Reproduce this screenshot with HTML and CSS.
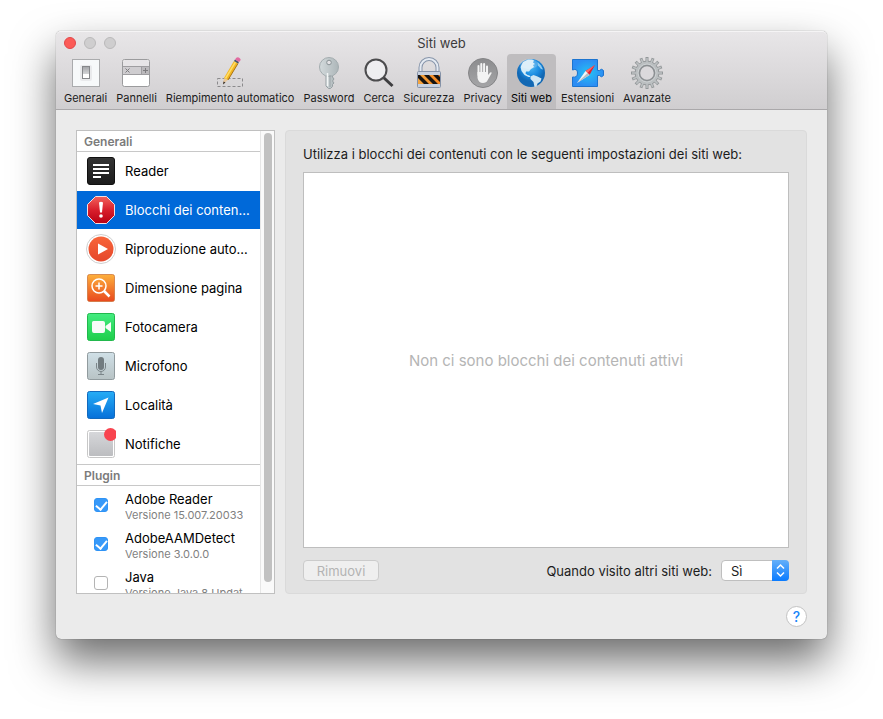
FILE: index.html
```html
<!DOCTYPE html>

<html lang="it">
	<head>
		<meta charset="utf-8" />
		<title>Siti web</title>
		<link rel="stylesheet" href="styles.css">
	</head>

	<body>
		<div class="window">
			<header class="titlebar">
				<div class="title">
					<div class="lights">
						<button class="light close" aria-label="Chiudi"></button>
						<button class="light" aria-label="Riduci" disabled></button>
						<button class="light" aria-label="Ingrandisci" disabled></button>
					</div>
					<h1>Siti web</h1>
				</div>

				<nav class="toolbar">
					<button class="tool">
						<svg width="32" height="32" viewBox="0 0 32 32">
							<rect x="2.5" y="2.5" width="27" height="27" fill="#f7f9fa" stroke="#aaabad"/>
							<rect x="10" y="8" width="12" height="16" rx="2" fill="#e9eaec"/>
							<rect x="12.5" y="9.500" width="7" height="12" fill="#fff" stroke="#85878a"/>
							<rect x="13" y="10" width="6" height="7" fill="url(#grey)"/>
						</svg>
						Generali
					</button>
					<button class="tool">
						<svg width="32" height="32" viewBox="0 0 32 32">
							<rect x="2.5" y="2.5" width="27" height="27" rx="2" fill="#fff" stroke="#9b9b9d"/>
							<path d="M3 5a2 2 0 0 1 2-2h22a2 2 0 0 1 2 2v5H3z" fill="#e7e5e7"/>
							<path d="M3 9.5h26v8H3z" fill="#cfcdd0"/>
							<path d="M3 9.5h26M3 17.5h26M21.5 9.5v8" stroke="#9e9da0" fill="none"/>
							<path d="M22 10h7v7h-7z" fill="#bbb9bc"/>
							<path d="M5.5 11.5l4 4m0-4l-4 4M23 13.5h5M25.5 11v5" stroke="#7d7c7f" fill="none"/>
						</svg>
						Pannelli
					</button>
					<button class="tool">
						<svg width="32" height="32" viewBox="0 0 32 32">
							<path d="M3.5 21.5h25v8h-25z" fill="none" stroke="#8b8a8c" stroke-dasharray="3 2"/>
							<path d="M9 27l1-6 4 2z" fill="#e8c79c"/>
							<path d="M10 21L20 4l4 2.5L14 23z" fill="#f2b51f"/>
							<path d="M11.5 21.5L21.5 5" stroke="#ffdd66" stroke-width="1.5"/>
							<path d="M14 23L24 6.5" stroke="#a87217"/>
							<path d="M20 4l1-1.500 4 2.500-1 1.500z" fill="#44546b"/>
							<path d="M21 2.500q2-3.500 4.500-1.500t-.5 4z" fill="#e26aa0"/>
							<path d="M9 27.5l.5-3 2 1z" fill="#3b332c"/>
						</svg>
						Riempimento automatico
					</button>
					<button class="tool">
						<svg width="32" height="32" viewBox="0 0 32 32">
							<path d="M13 17v12l2.500 2.500h2l2-2v-2l1.500-1.500-1.500-2 1.500-2-1.500-2v-3z" fill="url(#steel)" stroke="#969fa2"/>
							<circle cx="16" cy="10" r="9.500" fill="url(#steel)" stroke="#a3acaf"/>
							<circle cx="16" cy="5.500" r="2.300" fill="#e3e2e5" stroke="#8a9396"/>
							<path d="M14.5 16v13" stroke="#f3f6f6" stroke-width="1.5"/>
							<path d="M17 18v12" stroke="#99a2a6"/>
						</svg>
						Password
					</button>
					<button class="tool">
						<svg width="32" height="32" viewBox="0 0 32 32">
							<path d="M20 20l9.500 9" stroke="#3e3e40" stroke-width="3"/>
							<circle cx="13" cy="13" r="10.500" fill="#f2f3f5" fill-opacity=".8" stroke="#4c4c4e" stroke-width="2"/>
						</svg>
						Cerca
					</button>
					<button class="tool">
						<svg width="32" height="32" viewBox="0 0 32 32">
							<path d="M7.5 16V10.500a8.500 8.500 0 0 1 17 0V16" fill="none" stroke="#8795aa" stroke-width="4"/>
							<path d="M7.5 16V10.500a8.500 8.500 0 0 1 17 0V16" fill="none" stroke="#e4eaf2" stroke-width="2"/>
							<rect x="4.5" y="14.5" width="23" height="16" rx="1" fill="#c6d0df" stroke="#8592a7"/>
							<path d="M5 18h22v9H5z" fill="url(#amber)"/>
							<path d="M5 18h2l9 9h-5L5 21zM11 18h5l9 9h-5zM20 18h5l2 2v5z" fill="#171412"/>
						</svg>
						Sicurezza
					</button>
					<button class="tool">
						<svg width="32" height="32" viewBox="0 0 32 32">
							<circle cx="16" cy="16" r="14.500" fill="url(#disc)" stroke="#858587"/>
							<path d="M11.5 18V9M14.300 16V7M17.100 16V7M20 18V9.500" stroke="#f3f3f3" stroke-width="2" stroke-linecap="round"/>
							<path d="M10.500 15H21v3l2.200-2.500q1.700-.8 1.400.8l-4 7q-1.200 2.700-4.700 2.700-4.400 0-5.400-5z" fill="#f3f3f3"/>
						</svg>
						Privacy
					</button>
					<button class="tool active">
						<svg width="32" height="32" viewBox="0 0 32 32">
							<circle cx="16" cy="16" r="14" fill="url(#ocean)"/>
							<path d="M8 5l5-2.500h4l2 1-1 2 2 1.500-2 1 1 2-3 2-2 2.500-3 0-.5 2 2 1.500 2 .5 1 1.500-2 0-4-2-3-4-1-4z" fill="#d5ecf8"/>
							<path d="M15.500 19.500l3-1.500 4 1.500 4 2-1 3-3 2-1 3-2 .5-1-5-3-3z" fill="#cfe6f3"/>
							<path d="M22.500 5l3.500 3.500 2 4-2-.5-3-3.500z" fill="#8fcbf0"/>
							<ellipse cx="14" cy="7" rx="9" ry="5" fill="#fff" opacity=".2"/>
						</svg>
						Siti web
					</button>
					<button class="tool">
						<svg width="32" height="32" viewBox="0 0 32 32">
							<path d="M.5 2.5h25v11h2q2-2.500 4 0v5q-2 2.500-4 0h-2v11H.5V20q5 1 5-4t-5-3z" fill="url(#puzzle)" stroke="#1c74cf"/>
							<path d="M23 8l-5.500 10-4-4z" fill="#e4212e"/>
							<path d="M23 8l-9.500 6 2 2z" fill="#ff6a66"/>
							<path d="M5 26l8.500-12 4 4z" fill="#f4f6f7"/>
							<path d="M5 26l10.500-10 2 2z" fill="#b9bec2"/>
						</svg>
						Estensioni
					</button>
					<button class="tool">
						<svg width="32" height="32" viewBox="0 0 32 32">
							<g stroke="#94989a" stroke-width="3">
								<path d="M16 0v32M0 16h32"/>
								<path d="M16 0v32M0 16h32" transform="rotate(22.5 16 16)"/>
								<path d="M16 0v32M0 16h32" transform="rotate(45 16 16)"/>
								<path d="M16 0v32M0 16h32" transform="rotate(67.5 16 16)"/>
							</g>
							<circle cx="16" cy="16" r="12" fill="#b9bdbf" stroke="#94989a"/>
							<g stroke="#bcc0c2" stroke-width="1.5">
								<path d="M16 1v30M1 16h30"/>
								<path d="M16 1v30M1 16h30" transform="rotate(22.5 16 16)"/>
								<path d="M16 1v30M1 16h30" transform="rotate(45 16 16)"/>
								<path d="M16 1v30M1 16h30" transform="rotate(67.5 16 16)"/>
							</g>
							<circle cx="16" cy="16" r="9" fill="none" stroke="#cdd1d3"/>
							<circle cx="16" cy="16" r="7.500" fill="#dbd9dc" stroke="#8b8f92" stroke-width="1.5"/>
						</svg>
						Avanzate
					</button>
				</nav>
			</header>

			<main class="content">
				<aside class="sidebar">
					<div class="list">
						<h2>Generali</h2>
						<ul>
							<li><button class="row">
								<svg width="30" height="32" viewBox="0 0 30 32">
									<rect x="1.5" y="2.5" width="27" height="27" rx="2.5" fill="url(#ink)" stroke="#101010"/>
									<path d="M7 10h16M7 14h16M7 18h16M7 22h8" stroke="#fff" stroke-width="2"/>
								</svg>
								<span>Reader</span>
							</button></li>
							<li><button class="row selected">
								<svg width="30" height="32" viewBox="0 0 30 32">
									<path d="M9.5 2.5h11l8 8v11l-8 8h-11l-8-8v-11z" fill="url(#stop)" stroke="#f4dfe2"/>
									<path d="M13 8.500q2-1.500 4 0l-1 10h-2z" fill="#fff"/>
									<circle cx="15" cy="22" r="1.800" fill="#fff"/>
								</svg>
								<span>Blocchi dei contenuti</span>
							</button></li>
							<li><button class="row">
								<svg width="30" height="32" viewBox="0 0 30 32">
									<circle cx="15" cy="16" r="14.500" fill="#fff" stroke="#cfcfcf"/>
									<circle cx="15" cy="16" r="12.500" fill="url(#play)"/>
									<path d="M12 10.500l10 5.500-10 5.500z" fill="#fff"/>
								</svg>
								<span>Riproduzione automatica</span>
							</button></li>
							<li><button class="row">
								<svg width="30" height="32" viewBox="0 0 30 32">
									<rect x="1.5" y="2.5" width="27" height="27" rx="2" fill="url(#orange)" stroke="#c96c31" stroke-opacity=".7"/>
									<circle cx="13" cy="14" r="7" fill="none" stroke="#fff" stroke-width="1.5"/>
									<path d="M18 19l5.500 5.500" stroke="#fff" stroke-width="2.5"/>
									<path d="M9.500 14h7M13 10.500v7" stroke="#fff" stroke-width="1.5"/>
								</svg>
								<span>Dimensione pagina</span>
							</button></li>
							<li><button class="row">
								<svg width="30" height="32" viewBox="0 0 30 32">
									<rect x="1.5" y="2.5" width="27" height="27" rx="2" fill="url(#green)" stroke="#22b84d"/>
									<path d="M6 11.500q0-1.500 1.500-1.500H17q2 0 2 2v8q0 2-2 2H8q-2 0-2-2zM19.500 15l5.500-4v10l-5.500-4z" fill="#f7fbf8"/>
								</svg>
								<span>Fotocamera</span>
							</button></li>
							<li><button class="row">
								<svg width="30" height="32" viewBox="0 0 30 32">
									<rect x="1.5" y="2.5" width="27" height="27" rx="2" fill="url(#mist)" stroke="#919b9e"/>
									<rect x="12" y="7" width="6" height="13" rx="3" fill="#727c80"/>
									<path d="M10.500 13v4a4.500 4.500 0 0 0 9 0v-4M15 21.500v3M12 24.500h6" stroke="#7b8589" fill="none"/>
								</svg>
								<span>Microfono</span>
							</button></li>
							<li><button class="row">
								<svg width="30" height="32" viewBox="0 0 30 32">
									<rect x="1.5" y="2.5" width="27" height="27" rx="2" fill="url(#blue)" stroke="#1269bd"/>
									<path d="M22.500 8.500L16 24l-1.500-7.500L7 15z" fill="#fff"/>
								</svg>
								<span>Località</span>
							</button></li>
							<li><button class="row">
								<svg width="30" height="32" viewBox="0 0 30 32">
									<rect x="1.5" y="2.5" width="27" height="27" rx="2" fill="#fff" stroke="#c7c7c7"/>
									<rect x="3" y="4" width="24" height="24" rx="1" fill="url(#tile)"/>
									<circle cx="24.500" cy="6.500" r="6.500" fill="#f8444f"/>
								</svg>
								<span>Notifiche</span>
							</button></li>
						</ul>
						<h2 class="plugin">Plugin</h2>
						<ul>
							<li><label class="row">
								<input type="checkbox" checked>
								<span>Adobe Reader<small>Versione 15.007.20033</small></span>
							</label></li>
							<li><label class="row">
								<input type="checkbox" checked>
								<span>AdobeAAMDetect<small>Versione 3.0.0.0</small></span>
							</label></li>
							<li><label class="row">
								<input type="checkbox">
								<span>Java<small>Versione Java 8 Updat</small></span>
							</label></li>
						</ul>
					</div>
					<div class="track"><div class="thumb"></div></div>
				</aside>

				<section class="panel">
					<p>Utilizza i blocchi dei contenuti con le seguenti impostazioni dei siti web:</p>
					<div class="sites">Non ci sono blocchi dei contenuti attivi</div>
					<div class="controls">
						<button class="remove" disabled>Rimuovi</button>
						<label for="others">Quando visito altri siti web:</label>
						<div class="popup">
							<select id="others">
								<option>Sì</option>
								<option>No</option>
							</select>
							<svg class="arrows" width="17" height="21" viewBox="0 0 17 21">
								<path d="M5 8.500L8.500 5 12 8.500M5 12.500L8.500 16l3.500-3.500" fill="none" stroke="#fff" stroke-width="1.5"/>
							</svg>
						</div>
					</div>
				</section>
			</main>

			<footer>
				<button class="help" aria-label="Aiuto">?</button>
			</footer>
		</div>

		<!-- shared gradients for the icons -->
		<svg class="defs" width="0" height="0" aria-hidden="true">
			<defs>
				<linearGradient id="grey" x2="0" y2="1"><stop stop-color="#a5a7aa"/><stop offset="1" stop-color="#d4d5d7"/></linearGradient>
				<linearGradient id="steel" x2="1" y2="0"><stop stop-color="#d3dadc"/><stop offset="1" stop-color="#adb6b9"/></linearGradient>
				<linearGradient id="amber" x2="1" y2="0"><stop stop-color="#f3a540"/><stop offset="1" stop-color="#f5841f"/></linearGradient>
				<linearGradient id="disc" x2="0" y2="1"><stop stop-color="#8c8c8e"/><stop offset="1" stop-color="#a5a5a7"/></linearGradient>
				<radialGradient id="ocean" cy=".3"><stop stop-color="#4bb5f3"/><stop offset=".6" stop-color="#1a8be0"/><stop offset="1" stop-color="#1268b4"/></radialGradient>
				<radialGradient id="puzzle"><stop stop-color="#24c3f4"/><stop offset="1" stop-color="#2c8df3"/></radialGradient>
				<linearGradient id="ink" x2="0" y2="1"><stop stop-color="#343434"/><stop offset="1" stop-color="#1c1c1c"/></linearGradient>
				<linearGradient id="stop" x2="0" y2="1"><stop stop-color="#f2625c"/><stop offset=".5" stop-color="#d91f2c"/><stop offset="1" stop-color="#b80014"/></linearGradient>
				<linearGradient id="play" x2="0" y2="1"><stop stop-color="#f8653a"/><stop offset="1" stop-color="#e5472b"/></linearGradient>
				<linearGradient id="orange" x2="0" y2="1"><stop stop-color="#fdb03c"/><stop offset="1" stop-color="#e9481d"/></linearGradient>
				<linearGradient id="green" x2="0" y2="1"><stop stop-color="#43ec80"/><stop offset="1" stop-color="#1fce4b"/></linearGradient>
				<linearGradient id="mist" x2="0" y2="1"><stop stop-color="#d0e0e7"/><stop offset="1" stop-color="#b8c3c5"/></linearGradient>
				<linearGradient id="blue" x2="0" y2="1"><stop stop-color="#26adf6"/><stop offset="1" stop-color="#0670d9"/></linearGradient>
				<linearGradient id="tile" x2="0" y2="1"><stop stop-color="#d6d7da"/><stop offset="1" stop-color="#bcbdc0"/></linearGradient>
			</defs>
		</svg>
	</body>

</html>
```

FILE: styles.css
```css
*{
	box-sizing: border-box;
}

body{
	display: flex;
	height: 100vh;
	margin: 0;
	padding: 31px 56px 80px;
	overflow: hidden;
	background-color: #fff;
	color: #1c1c1c;
	font-family: Inter, "Liberation Sans", sans-serif;
	font-size: 13px;
}

h1, h2, p, ul{
	margin: 0;
	padding: 0;
}

ul{
	list-style: none;
}

button, select, input{
	margin: 0;
	padding: 0;
	border: none;
	background: none;
	color: inherit;
	font: inherit;
}

.defs{
	position: absolute;
}

.window{
	display: flex;
	flex-direction: column;
	flex: 1;
	min-width: 0;
	border-radius: 5px;
	background-color: #ebebeb;
	box-shadow: 0 0 1px rgba(0,0,0,.6), 0 22px 44px rgba(0,0,0,.58);
}

/* title bar and toolbar */

.titlebar{
	height: 79px;
	border-top: 1px solid #f5f4f5;
	border-bottom: 1px solid #aaa8aa;
	border-radius: 5px 5px 0 0;
	background: linear-gradient(#e8e6e8, #d0ced0);
}

.title{
	display: grid;
	grid-template-columns: 1fr auto 1fr;
	align-items: center;
	height: 22px;
	padding: 0 8px;
}

.title h1{
	font-size: 13px;
	font-weight: normal;
	color: #3c3b3c;
}

.lights{
	display: flex;
	gap: 8px;
}

.light{
	width: 12px;
	height: 12px;
	border: 1px solid #bab9ba;
	border-radius: 50%;
	background-color: #cfcecf;
}

.close{
	border-color: #e2474a;
	background-color: #fc5b57;
}

.toolbar{
	display: flex;
	gap: 1px;
	padding: 0 4px;
}

.tool{
	display: flex;
	flex-direction: column;
	align-items: center;
	gap: 1px;
	height: 55px;
	padding: 3px 4px 0;
	border-radius: 4px 4px 0 0;
	font-size: 11px;
	line-height: 16px;
	white-space: nowrap;
}

.tool svg{
	margin: 0 -2px;
}

.active{
	background-color: #bfbdbf;
	color: #000;
}

/* main area */

.content{
	display: flex;
	flex: 1;
	gap: 10px;
	min-height: 0;
	padding: 20px 20px 0;
}

.sidebar{
	display: flex;
	flex: none;
	width: 199px;
	border: 1px solid #c0c0c0;
	background-color: #fff;
	color: #000;
}

.list{
	flex: 1;
	min-width: 0;
	overflow: hidden;
}

.list h2{
	height: 21px;
	padding-left: 7px;
	border-bottom: 1px solid #c8c8c8;
	color: #7b7b7b;
	font-size: 12px;
	font-weight: 600;
	line-height: 21px;
}

.list .plugin{
	height: 22px;
	border-top: 1px solid #c8c8c8;
}

.list li{
	height: 39px;
}

.row{
	display: flex;
	align-items: center;
	gap: 9px;
	width: 100%;
	height: 38px;
	padding: 0 9px;
	text-align: left;
}

.row svg{
	flex: none;
}

.row span{
	overflow: hidden;
	line-height: 16px;
	text-overflow: ellipsis;
	white-space: nowrap;
}

label.row span{
	padding-top: 3px;
}

.row small{
	display: block;
	color: #7f7f7f;
	font-size: 11px;
}

.selected{
	background-color: #0069d9;
	color: #fff;
}

.row input{
	display: grid;
	place-items: center;
	flex: none;
	width: 14px;
	height: 14px;
	margin: 0 8px;
	border: 1px solid #b4b4b4;
	border-radius: 3px;
	appearance: none;
	background-color: #fff;
}

.row input:checked{
	border-color: #2f93f5;
	background-color: #3799f9;
}

.row input:checked::after{
	content: "";
	width: 5px;
	height: 9px;
	margin-bottom: 3px;
	border: solid #fff;
	border-width: 0 2px 2px 0;
	transform: rotate(40deg);
}

.track{
	width: 14px;
	padding: 2px 2px 11px 3px;
	border-left: 1px solid #e6e6e6;
	background-color: #fafafa;
}

.thumb{
	width: 8px;
	height: 100%;
	border-radius: 4px;
	background-color: #c1c1c1;
}

.panel{
	display: flex;
	flex-direction: column;
	flex: 1;
	min-width: 0;
	padding: 14px 17px 12px;
	border: 1px solid #dadada;
	border-radius: 4px;
	background-color: #e2e2e2;
}

.panel p{
	line-height: 18px;
	white-space: nowrap;
}

.sites{
	display: flex;
	align-items: center;
	justify-content: center;
	flex: 1;
	margin: 9px 0 12px;
	border: 1px solid #bebebe;
	background-color: #fff;
	color: #b5b5b5;
	font-size: 15px;
}

.controls{
	display: flex;
	align-items: center;
	gap: 9px;
}

.remove{
	width: 76px;
	height: 21px;
	margin-right: auto;
	border: 1px solid #cbcbcb;
	border-radius: 4px;
	background-color: #efefef;
	color: #b3b3b3;
}

.popup{
	position: relative;
	width: 68px;
	height: 21px;
}

.popup select{
	width: 100%;
	height: 100%;
	padding: 0 9px;
	border: 1px solid #bfbfbf;
	border-radius: 4px;
	appearance: none;
	background-color: #fff;
	color: #1c1c1c;
}

.arrows{
	position: absolute;
	top: 0;
	right: 0;
	border-radius: 0 4px 4px 0;
	background: linear-gradient(#65b0f9, #0a7bff);
	pointer-events: none;
}

footer{
	display: flex;
	justify-content: flex-end;
	padding: 12px 20px;
}

.help{
	width: 21px;
	height: 21px;
	border: 1px solid #c3c3c3;
	border-radius: 50%;
	background-color: #fff;
	color: #1a86f8;
	font-size: 14px;
	font-weight: 500;
	line-height: 19px;
}
```
